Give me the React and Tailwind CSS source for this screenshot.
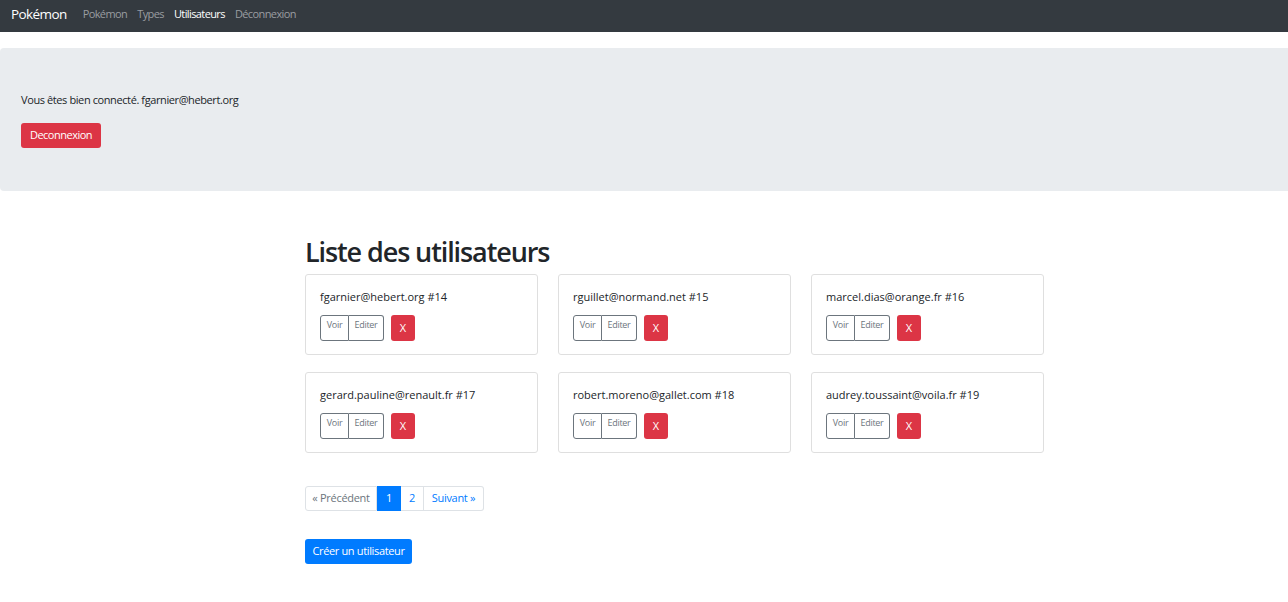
import React from 'react';

const users = [
  { email: 'fgarnier@hebert.org', id: 14 },
  { email: 'rguillet@normand.net', id: 15 },
  { email: 'marcel.dias@orange.fr', id: 16 },
  { email: 'gerard.pauline@renault.fr', id: 17 },
  { email: 'robert.moreno@gallet.com', id: 18 },
  { email: 'audrey.toussaint@voila.fr', id: 19 },
];

const UserCard = ({ user }) => (
  <div className="border border-[#dfdfdf] rounded-[3px] bg-white px-[14px] pt-[13px] pb-[14px] h-[81px]">
    <p className="text-[11px] leading-[17px] text-[#212529]">{user.email} #{user.id}</p>
    <div className="flex items-center mt-[10px]">
      <div className="flex">
        <button className="h-[26px] w-[29px] border border-[#6c757d] rounded-l-[3px] text-[9px] tracking-[-0.3px] text-[#6c757d] pb-[6px]">Voir</button>
        <button className="h-[26px] w-[35px] border border-l-0 border-[#6c757d] rounded-r-[3px] text-[9px] tracking-[-0.3px] text-[#6c757d] pb-[6px]">Editer</button>
      </div>
      <button className="ml-[7px] h-[26px] w-[24px] rounded-[3px] bg-[#dc3545] text-white text-[11px]">X</button>
    </div>
  </div>
);

export default function App() {
  return (
    <div className="min-h-[602px] bg-white font-['Open_Sans',sans-serif] text-[#212529]">
      <nav className="h-[32px] bg-[#343a40] flex items-center px-[11px] pb-[4px]">
        <span className="text-white text-[13.5px] tracking-[-0.6px] mr-[11px]">Pokémon</span>
        <div className="flex text-[11px] tracking-[-0.6px]">
          <a className="px-[5px] text-[#9a9da0]">Pokémon</a>
          <a className="px-[5px] text-[#9a9da0]">Types</a>
          <a className="px-[5px] text-white">Utilisateurs</a>
          <a className="px-[5px] text-[#9a9da0]">Déconnexion</a>
        </div>
      </nav>

      <div className="mt-[16px] bg-[#e9ecef] rounded-l-[4px] h-[143px] px-[21px] pt-[43px]">
        <p className="text-[11px] leading-[17px] tracking-[-0.4px]">Vous êtes bien connecté. fgarnier@hebert.org</p>
        <button className="mt-[15px] h-[25px] w-[80px] rounded-[3px] bg-[#dc3545] text-white text-[11px] tracking-[-0.5px]">Deconnexion</button>
      </div>

      <div className="ml-[305px] w-[739px] mt-[44px]">
        <h1 className="text-[27px] leading-[34px] font-semibold tracking-[-1.1px] mb-[5px]">Liste des utilisateurs</h1>
        <div className="grid grid-cols-3 gap-x-[20px] gap-y-[17px]">
          {users.map(u => <UserCard key={u.id} user={u} />)}
        </div>

        <div className="flex mt-[33px] h-[25px] text-[11px] tracking-[-0.3px]">
          <span className="flex items-center justify-center w-[72px] border border-[#dee2e6] rounded-l-[3px] text-[#6c757d]">« Précédent</span>
          <span className="flex items-center justify-center w-[24px] bg-[#007bff] border border-[#007bff] text-white">1</span>
          <span className="flex items-center justify-center w-[23px] border border-l-0 border-[#dee2e6] text-[#007bff]">2</span>
          <span className="flex items-center justify-center w-[60px] border border-l-0 border-[#dee2e6] rounded-r-[3px] text-[#007bff]">Suivant »</span>
        </div>

        <button className="mt-[28px] h-[25px] w-[107px] rounded-[3px] bg-[#007bff] text-white text-[11px] tracking-[-0.35px]">Créer un utilisateur</button>
      </div>
    </div>
  );
}
